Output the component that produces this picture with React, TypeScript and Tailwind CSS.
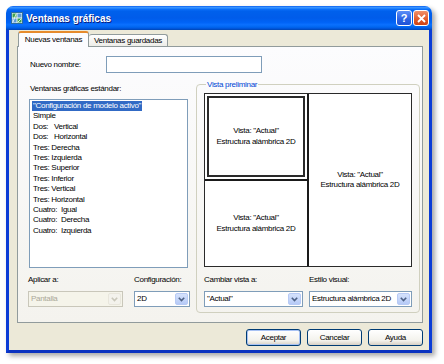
const items = [
  '"Configuración de modelo activo"',
  "Simple",
  "Dos:   Vertical",
  "Dos:   Horizontal",
  "Tres: Derecha",
  "Tres: Izquierda",
  "Tres: Superior",
  "Tres: Inferior",
  "Tres: Vertical",
  "Tres: Horizontal",
  "Cuatro:  Igual",
  "Cuatro:  Derecha",
  "Cuatro:  Izquierda",
];

const Chevron = ({ color }: { color: string }) => (
  <svg width="7" height="5" viewBox="0 0 7 5">
    <path d="M0.8 0.8 L3.5 3.6 L6.2 0.8" fill="none" stroke={color} strokeWidth="1.6" />
  </svg>
);

const Combo = ({ text, className, disabled }: { text: string; className: string; disabled?: boolean }) => (
  <div
    className={
      "flex h-[16px] items-center border " +
      (disabled ? "border-[#C9C7BA] bg-[#F5F4EA] text-[#ACA899] " : "border-[#7F9DB9] bg-white text-black ") +
      className
    }
  >
    <span className="flex-1 overflow-hidden pl-[2px] whitespace-pre">{text}</span>
    <div
      className={
        "m-[1px] flex h-[12px] w-[13px] shrink-0 items-center justify-center rounded-[2px] border " +
        (disabled
          ? "border-[#E8E6DC] bg-[#F3F2EC]"
          : "border-[#B7CAF5] bg-[linear-gradient(#D5E2FC,#B6CAF7)]")
      }
    >
      <Chevron color={disabled ? "#C9C7BA" : "#4D6185"} />
    </div>
  </div>
);

const Cell = ({ className }: { className: string }) => (
  <div className={"flex flex-col items-center justify-center leading-[10.5px] " + className}>
    <span>Vista: "Actual"</span>
    <span>Estructura alámbrica 2D</span>
  </div>
);

const Button = ({ label, main }: { label: string; main?: boolean }) => (
  <button
    className={
      "h-[17px] w-[55px] rounded-[3px] border border-[#003C74] bg-[linear-gradient(#FFFFFF,#F3F2EC_70%,#D6D0C5)] text-black " +
      (main ? "shadow-[inset_0_0_0_1px_#A8C2F4]" : "")
    }
  >
    {label}
  </button>
);

const App = () => {
  return (
    <div className="h-[364px] w-[444px] overflow-hidden bg-white pl-[6px] pt-[6px] font-['Liberation_Sans',Arial,sans-serif] text-[8px] tracking-[-0.3px] text-black">
      <div className="flex h-[347px] w-[426px] flex-col shadow-[3px_3px_5px_rgba(0,0,0,0.35)] rounded-t-[7px]">
        {/* barra de titulo */}
        <div className="flex h-[24px] items-center rounded-t-[7px] bg-[linear-gradient(#0058EE_0%,#3D95FF_5%,#2A8BFF_9%,#0A6EF8_14%,#0060EC_22%,#005CEA_50%,#0063F6_68%,#0A70FE_78%,#0066F0_88%,#0055DA_94%,#0044B0_100%)] pl-[5px] pr-[3px]">
          <svg width="12" height="12" viewBox="0 0 12 12">
            <rect x="0.5" y="0.5" width="11" height="11" fill="#EAF4FF" stroke="#2E6E9E" />
            <rect x="1.5" y="1.5" width="4" height="4" fill="#3FA34D" />
            <rect x="6.5" y="1.5" width="4" height="4" fill="#5B9BD5" />
            <rect x="1.5" y="6.5" width="4" height="4" fill="#5B9BD5" />
            <rect x="6.5" y="6.5" width="4" height="4" fill="#3FA34D" />
            <path d="M2 10 L5 2 M7 10 L10 7" stroke="#FFFFFF" strokeWidth="0.8" />
          </svg>
          <span className="ml-[3px] flex-1 text-[10px] font-bold tracking-normal text-white [text-shadow:1px_1px_0_#0A1E80]">
            Ventanas gráficas
          </span>
          <div className="flex h-[16px] w-[16px] items-center justify-center rounded-[3px] border border-white bg-[linear-gradient(#5C8EF7,#2C62E3_60%,#1E52D6)] text-[11px] font-bold text-white">
            ?
          </div>
          <div className="ml-[1px] flex h-[16px] w-[16px] items-center justify-center rounded-[3px] border border-white bg-[linear-gradient(#F0906A,#E15A2A_60%,#CC4216)]">
            <svg width="9" height="9" viewBox="0 0 9 9">
              <path d="M1 1 L8 8 M8 1 L1 8" stroke="#FFFFFF" strokeWidth="1.8" />
            </svg>
          </div>
        </div>

        {/* cuerpo */}
        <div className="flex flex-1 flex-col border-x-[3px] border-b-[3px] border-x-[#0B3CD6] border-b-[#0A32C0] bg-[#ECE9D8]">
          {/* pestañas */}
          <div className="ml-[9px] mt-[1px] flex h-[16px] items-end">
            <div className="relative z-10 flex h-[16px] w-[71px] items-center justify-center rounded-t-[3px] border-x border-t-2 border-x-[#919B9C] border-t-[#E68B2C] bg-[#FCFCFE]">
              Nuevas ventanas
            </div>
            <div className="flex h-[13px] w-[79px] items-center justify-center rounded-t-[3px] border-r border-t border-[#919B9C] bg-[linear-gradient(#FFFFFF,#ECEBE6)]">
              Ventanas guardadas
            </div>
          </div>

          {/* panel */}
          <div className="-mt-[1px] ml-[8px] h-[277px] w-[406px] border border-[#919B9C] bg-[linear-gradient(#FCFCFE,#F4F3EE)] pl-[10px] pt-[9px]">
            <div className="flex h-[17px] items-center">
              <span className="w-[78px] pl-[2px]">Nuevo nombre:</span>
              <div className="h-[17px] w-[156px] border border-[#7F9DB9] bg-white" />
            </div>

            <div className="mt-[6px] flex items-start">
              {/* columna izquierda */}
              <div className="flex w-[162px] flex-col">
                <span className="mt-[5px] h-[10px] pl-[2px] leading-[10px]">Ventanas gráficas estándar:</span>
                <div className="ml-[1px] mt-[5px] flex h-[169px] w-[159px] flex-col items-start border border-[#7F9DB9] bg-white pl-[2px] pt-[1px] leading-[10.4px]">
                  {items.map((it, i) => (
                    <span
                      key={it}
                      className={
                        "whitespace-pre px-[1px] " + (i === 0 ? "bg-[#316AC5] text-white" : "")
                      }
                    >
                      {it}
                    </span>
                  ))}
                </div>
                <div className="mt-[7px] flex h-[10px] leading-[10px]">
                  <span className="w-[106px]">Aplicar a:</span>
                  <span>Configuración:</span>
                </div>
                <div className="mt-[6px] flex gap-[11px]">
                  <Combo text="Pantalla" className="w-[95px]" disabled />
                  <Combo text="2D" className="w-[56px]" />
                </div>
              </div>

              {/* vista preliminar */}
              <fieldset className="ml-[6px] w-[221px] rounded-[4px] border border-[#D0D0BF] px-[7px] pb-[5px]">
                <legend className="ml-[2px] px-[1px] leading-[11px] text-[#0046D5]">Vista preliminar</legend>
                <div className="mt-[3px] flex h-[174px] w-[208px] border border-[#2A2A2A] bg-white">
                  <div className="flex w-[104px] flex-col border-r-2 border-[#1A1A1A]">
                    <div className="h-[87px] border-b-2 border-[#1A1A1A] p-[2px]">
                      <Cell className="h-full border-2 border-[#2A2A2A]" />
                    </div>
                    <Cell className="flex-1" />
                  </div>
                  <Cell className="flex-1" />
                </div>
                <div className="mt-[8px] flex h-[10px] leading-[10px]">
                  <span className="w-[105px]">Cambiar vista a:</span>
                  <span>Estilo visual:</span>
                </div>
                <div className="mt-[6px] flex gap-[6px]">
                  <Combo text={'"Actual"'} className="w-[99px]" />
                  <Combo text="Estructura alámbrica 2D" className="w-[103px]" />
                </div>
              </fieldset>
            </div>
          </div>

          {/* botones */}
          <div className="mr-[6px] mt-[6px] flex justify-end gap-[6px]">
            <Button label="Aceptar" main />
            <Button label="Cancelar" />
            <Button label="Ayuda" />
          </div>
        </div>
      </div>
    </div>
  );
};

export default App;
